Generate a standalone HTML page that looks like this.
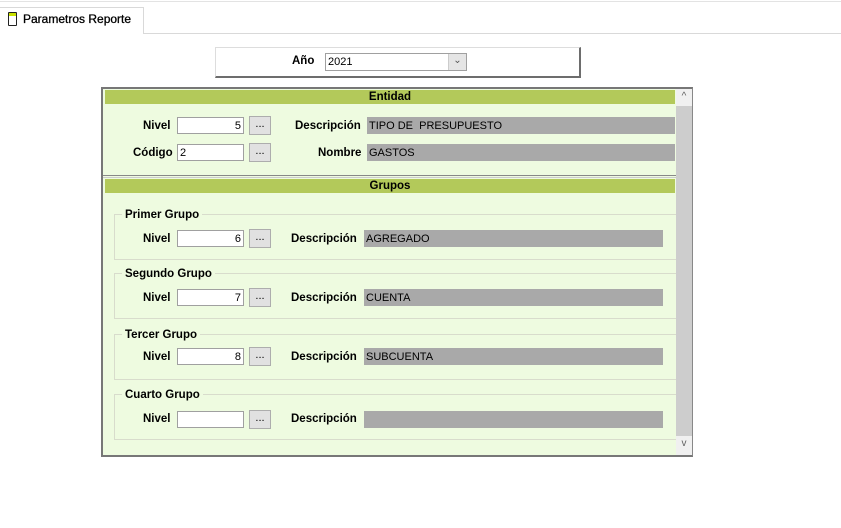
<!DOCTYPE html>
<html><head><meta charset="utf-8"><style>
*{margin:0;padding:0;box-sizing:border-box}
body{width:841px;height:528px;background:#fff;font-family:"Liberation Sans",sans-serif;position:relative;overflow:hidden}
.a{position:absolute}
.lb{position:absolute;font-weight:bold;font-size:11.5px;color:#000;white-space:nowrap;line-height:14px}
.in{position:absolute;background:#fff;border:1px solid #a0a0a0;font-size:11px;line-height:16px;height:17px;padding:0 2px}
.bt{position:absolute;background:#e1e1e1;border:1px solid #adadad;width:22px;height:19px;font-size:11px;text-align:center;line-height:15px}
.ds{position:absolute;background:#a9a9a9;font-size:11px;line-height:19px;height:17px;padding-left:2px;color:#000}
.hd{position:absolute;left:105px;width:570px;height:14px;background:#b3c95a;font-weight:bold;font-size:11.5px;text-align:center;line-height:14px}
.fs{position:absolute;left:114px;width:562px;border:1px solid #d8dccc;border-right:none}
.lg{position:absolute;background:#eefbe0;font-weight:bold;font-size:11.5px;padding:0 3px;line-height:14px}
</style></head><body>
<div class="a" style="left:0;top:1px;width:841px;height:1px;background:#e3e3e3"></div>
<div class="a" style="left:0;top:33px;width:841px;height:1px;background:#d9d9d9"></div>
<div class="a" style="left:0;top:7px;width:144px;height:27px;background:#fff;border:1px solid #d9d9d9;border-bottom:none;border-left:none"></div>
<div class="a" style="left:8px;top:12px;width:9px;height:14px;border:1px solid #222;border-radius:1px;background:#fff"></div>
<div class="a" style="left:9px;top:13px;width:7px;height:3px;background:#c8e000"></div>
<div class="lb" style="left:23px;top:12px;font-weight:normal;font-size:12px;-webkit-text-stroke:0.3px #000">Parametros Reporte</div>

<div class="a" style="left:215px;top:47px;width:366px;height:31px;border:1px solid #ddd;border-right:2px solid #6d6d6d;border-bottom:2px solid #6d6d6d"></div>
<div class="lb" style="left:292px;top:54px">Año</div>
<div class="a" style="left:325px;top:53px;width:142px;height:18px;border:1px solid #a0a0a0;font-size:11px;line-height:17px;padding-left:2px">2021</div>
<div class="a" style="left:448px;top:54px;width:18px;height:16px;background:#e5e5e5;border-left:1px solid #ccc;font-size:10px;text-align:center;line-height:14px;color:#555">⌄</div>

<div class="a" style="left:101px;top:87px;width:592px;height:370px;border:1px solid #888;border-top:2px solid #777;border-bottom:2px solid #777;border-left:2px solid #777;background:#eefbe0"></div>
<div class="a" style="left:676px;top:89px;width:16px;height:366px;background:#f0f0f0"></div>
<div class="a" style="left:676px;top:106px;width:16px;height:330px;background:#cdcdcd"></div>
<div class="a" style="left:676px;top:91px;width:16px;font-size:10px;text-align:center;color:#606060">^</div>
<div class="a" style="left:676px;top:438px;width:16px;font-size:10px;text-align:center;color:#606060">v</div>

<div class="hd" style="top:90px">Entidad</div>
<div class="lb" style="left:143px;top:119px">Nivel</div>
<div class="in" style="left:177px;top:117px;width:67px;text-align:right">5</div>
<div class="bt" style="left:249px;top:116px">...</div>
<div class="lb" style="left:295px;top:119px">Descripción</div>
<div class="ds" style="left:367px;top:117px;width:308px">TIPO DE&nbsp; PRESUPUESTO</div>
<div class="lb" style="left:133px;top:146px">Código</div>
<div class="in" style="left:177px;top:144px;width:67px">2</div>
<div class="bt" style="left:249px;top:143px">...</div>
<div class="lb" style="left:318px;top:146px">Nombre</div>
<div class="ds" style="left:367px;top:144px;width:308px">GASTOS</div>

<div class="a" style="left:103px;top:175px;width:573px;height:3px;border-top:1px solid #888;border-bottom:1px solid #ccc"></div>
<div class="hd" style="top:179px">Grupos</div>

<div class="fs" style="top:214px;height:46px"></div>
<div class="lg" style="left:122px;top:208px">Primer Grupo</div>
<div class="lb" style="left:143px;top:232px">Nivel</div>
<div class="in" style="left:177px;top:230px;width:67px;text-align:right">6</div>
<div class="bt" style="left:249px;top:229px">...</div>
<div class="lb" style="left:291px;top:232px">Descripción</div>
<div class="ds" style="left:364px;top:230px;width:299px">AGREGADO</div>

<div class="fs" style="top:273px;height:46px"></div>
<div class="lg" style="left:122px;top:267px">Segundo Grupo</div>
<div class="lb" style="left:143px;top:291px">Nivel</div>
<div class="in" style="left:177px;top:289px;width:67px;text-align:right">7</div>
<div class="bt" style="left:249px;top:288px">...</div>
<div class="lb" style="left:291px;top:291px">Descripción</div>
<div class="ds" style="left:364px;top:289px;width:299px">CUENTA</div>

<div class="fs" style="top:334px;height:46px"></div>
<div class="lg" style="left:122px;top:328px">Tercer Grupo</div>
<div class="lb" style="left:143px;top:350px">Nivel</div>
<div class="in" style="left:177px;top:348px;width:67px;text-align:right">8</div>
<div class="bt" style="left:249px;top:347px">...</div>
<div class="lb" style="left:291px;top:350px">Descripción</div>
<div class="ds" style="left:364px;top:348px;width:299px">SUBCUENTA</div>

<div class="fs" style="top:394px;height:46px"></div>
<div class="lg" style="left:122px;top:388px">Cuarto Grupo</div>
<div class="lb" style="left:143px;top:412px">Nivel</div>
<div class="in" style="left:177px;top:411px;width:67px"></div>
<div class="bt" style="left:249px;top:410px">...</div>
<div class="lb" style="left:291px;top:412px">Descripción</div>
<div class="ds" style="left:364px;top:411px;width:299px"></div>
</body></html>
